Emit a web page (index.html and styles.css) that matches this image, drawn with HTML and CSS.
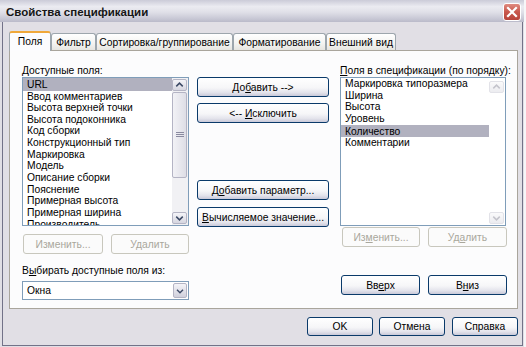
FILE: index.html
```html
<!DOCTYPE html>
<html lang="ru">
<head>
<meta charset="utf-8">
<title>Свойства спецификации</title>
<link rel="stylesheet" href="styles.css">
</head>
<body>
<div class="window">
  <div class="titlebar">
    <span class="title">Свойства спецификации</span>
    <div class="close">
      <svg width="18" height="18" viewBox="0 0 18 18">
        <path d="M5 5 L13 13 M13 5 L5 13" stroke="#fff" stroke-width="2.2" stroke-linecap="square"/>
      </svg>
    </div>
  </div>
  <div class="frame">
    <div class="tabs">
      <div class="tab active t1">Поля</div>
      <div class="tab t2">Фильтр</div>
      <div class="tab t3">Сортировка/группирование</div>
      <div class="tab t4">Форматирование</div>
      <div class="tab t5">Внешний вид</div>
    </div>
    <div class="panel">
      <div class="col col-left">
        <div class="label"><u>Д</u>оступные поля:</div>
        <div class="list">
          <div class="items">
            <div class="item sel">URL</div>
            <div class="item">Ввод комментариев</div>
            <div class="item">Высота верхней точки</div>
            <div class="item">Высота подоконника</div>
            <div class="item">Код сборки</div>
            <div class="item">Конструкционный тип</div>
            <div class="item">Маркировка</div>
            <div class="item">Модель</div>
            <div class="item">Описание сборки</div>
            <div class="item">Пояснение</div>
            <div class="item">Примерная высота</div>
            <div class="item">Примерная ширина</div>
            <div class="item">Производитель</div>
          </div>
          <div class="vscroll">
            <div class="sbtn">
              <svg width="14" height="12" viewBox="0 0 14 12"><path d="M3.5 7.5 L7 4 L10.5 7.5" fill="none" stroke="#3c4a66" stroke-width="1.6"/></svg>
            </div>
            <div class="track">
              <div class="thumb">
                <svg width="8" height="6" viewBox="0 0 8 6"><path d="M0 0.5 H8 M0 2.5 H8 M0 4.5 H8" stroke="#8a8aa0" stroke-width="1"/></svg>
              </div>
            </div>
            <div class="sbtn">
              <svg width="14" height="12" viewBox="0 0 14 12"><path d="M3.5 4.5 L7 8 L10.5 4.5" fill="none" stroke="#3c4a66" stroke-width="1.6"/></svg>
            </div>
          </div>
        </div>
        <div class="btnrow row-left">
          <button class="btn dis b-edit-l">Изменить...</button>
          <button class="btn dis b-del-l">Удалить</button>
        </div>
        <div class="label label-src">В<u>ы</u>бирать доступные поля из:</div>
        <div class="combo">
          <span class="combo-text">Окна</span>
          <div class="dd">
            <svg width="14" height="16" viewBox="0 0 14 16"><path d="M3.5 6.5 L7 10 L10.5 6.5" fill="none" stroke="#3c4a66" stroke-width="1.6"/></svg>
          </div>
        </div>
      </div>

      <div class="col col-mid">
        <button class="btn mid b-add">До<u>б</u>авить --&gt;</button>
        <button class="btn mid b-excl">&lt;-- <u>И</u>сключить</button>
        <button class="btn mid b-param">Д<u>о</u>бавить параметр...</button>
        <button class="btn mid b-calc"><u>В</u>ычисляемое значение...</button>
      </div>

      <div class="col col-right">
        <div class="label"><u>П</u>оля в спецификации (по порядку):</div>
        <div class="list list-right">
          <div class="items">
            <div class="item">Маркировка типоразмера</div>
            <div class="item">Ширина</div>
            <div class="item">Высота</div>
            <div class="item">Уровень</div>
            <div class="item sel">Количество</div>
            <div class="item">Комментарии</div>
          </div>
          <div class="vscroll disabled">
            <div class="sbtn">
              <svg width="14" height="12" viewBox="0 0 14 12"><path d="M3.5 7.5 L7 4 L10.5 7.5" fill="none" stroke="#c4c4cc" stroke-width="1.6"/></svg>
            </div>
            <div class="track"></div>
            <div class="sbtn">
              <svg width="14" height="12" viewBox="0 0 14 12"><path d="M3.5 4.5 L7 8 L10.5 4.5" fill="none" stroke="#c4c4cc" stroke-width="1.6"/></svg>
            </div>
          </div>
        </div>
        <div class="btnrow row-right">
          <button class="btn dis b-edit-r">Из<u>м</u>енить...</button>
          <button class="btn dis b-del-r">Уд<u>а</u>лить</button>
        </div>
        <div class="btnrow row-move">
          <button class="btn b-up">Вв<u>е</u>рх</button>
          <button class="btn b-down">В<u>н</u>из</button>
        </div>
      </div>
    </div>
    <div class="footer">
      <button class="btn foot">OK</button>
      <button class="btn foot f2">Отмена</button>
      <button class="btn foot f3">Справка</button>
    </div>
  </div>
</div>
</body>
</html>
```

FILE: styles.css
```css
* { box-sizing: border-box; }

html, body {
  margin: 0;
  padding: 0;
  background: #f6f6f8;
  font-family: "Liberation Sans", Arial, sans-serif;
  font-size: 10.3px;
  color: #000;
}

.window {
  width: 524px;
  height: 347px;
  background: #e1dfe5;
  display: flex;
  flex-direction: column;
}

.titlebar {
  height: 22px;
  flex: none;
  display: flex;
  align-items: center;
  justify-content: space-between;
  padding: 0 3px 0 6px;
  background: linear-gradient(#cbcbd8 0%, #ebebf1 30%, #e0e0e8 55%, #c8c8d5 85%, #babac9 100%);
}

.title {
  font-weight: bold;
  font-size: 11.5px;
  color: #161616;
  padding-top: 2px;
}

.close {
  width: 18px;
  height: 18px;
  border: 1px solid #fff;
  border-radius: 3px;
  background: linear-gradient(#df8b80, #c8574c 50%, #b7443b);
  display: flex;
  align-items: center;
  justify-content: center;
  margin-top: 2px;
}
.close svg { display: block; margin: -1px; }

.frame {
  flex: 1;
  margin: 0 1px 1px 2px;
  border: 1px solid #727288;
  border-top: none;
  padding: 9px 4px 0 6px;
  display: flex;
  flex-direction: column;
}

.tabs {
  display: flex;
  align-items: flex-end;
  height: 19px;
  flex: none;
}

.tab {
  height: 17px;
  border: 1px solid #9da6ad;
  border-bottom: none;
  border-radius: 3px 3px 0 0;
  background: linear-gradient(#ffffff, #f3f3f1 60%, #e6e5e0);
  display: flex;
  align-items: center;
  justify-content: center;
  white-space: nowrap;
  padding-top: 1px;
}
.tab.active {
  height: 20px;
  margin-bottom: -1px;
  position: relative;
  z-index: 1;
  background: #fcfcfe;
  border-top: 2px solid #f0a83a;
  border-color: #9da6ad;
  border-top-color: #f0a83a;
  padding-top: 0;
  padding-bottom: 2px;
}
.t1 { width: 42px; }
.t2 { width: 45px; }
.t3 { width: 137px; }
.t4 { width: 93px; }
.t5 { width: 70px; }

.panel {
  width: 509px;
  height: 259px;
  flex: none;
  border: 1px solid #a9a59c;
  background: #fcfcfd;
  padding: 13px 0 0 12px;
  display: flex;
}

.col { display: flex; flex-direction: column; }
.col-left { width: 167px; }
.col-mid { width: 132px; margin-left: 8px; padding-top: 13px; }
.col-right { width: 167px; margin-left: 11px; }

.label {
  height: 13px;
  line-height: 13px;
  white-space: nowrap;
}
.label-src { margin-top: 10px; }

.list {
  height: 149px;
  border: 1px solid #7f9db9;
  background: #fff;
  display: flex;
  overflow: hidden;
}
.list-right { width: 166px; }

.items {
  flex: 1;
  overflow: hidden;
}
.item {
  height: 11.67px;
  line-height: 11.67px;
  padding-left: 4px;
  white-space: nowrap;
}
.item.sel {
  background: #b1b1bf;
  height: 12.5px;
  line-height: 13px;
}

.vscroll {
  width: 16px;
  flex: none;
  display: flex;
  flex-direction: column;
  padding: 1px 1px 1px 0;
  background: #f1f1f4;
}
.vscroll.disabled { background: #fff; padding-top: 3px; padding-bottom: 1px; }

.sbtn {
  height: 12px;
  flex: none;
  border: 1px solid #b4b4c4;
  border-radius: 2px;
  background: linear-gradient(#f4f4f8, #d6d6e0);
  display: flex;
  align-items: center;
  justify-content: center;
}
.sbtn svg { display: block; }
.vscroll.disabled .sbtn {
  border-color: #e2e2e8;
  background: linear-gradient(#fafafb, #ececf0);
}

.track {
  flex: 1;
  padding: 1px 0 34px;
  display: flex;
}
.thumb {
  flex: 1;
  border: 1px solid #b4b4c4;
  border-radius: 2px;
  background: linear-gradient(90deg, #f2f2f6, #dedee6);
  display: flex;
  align-items: center;
  justify-content: center;
}

.btn {
  font-family: "Liberation Sans", Arial, sans-serif;
  font-size: 10.3px;
  color: #000;
  height: 20px;
  padding: 0;
  border: 1px solid #0a3a6a;
  border-radius: 3px;
  background: linear-gradient(#ffffff 0%, #f6f6f8 55%, #e4e4ec 80%, #c9c9d9 100%);
  white-space: nowrap;
  line-height: 17px;
}
.btn.dis {
  border-color: #c8c7bd;
  color: #a9a79c;
  background: #fbfbfb;
}

.btnrow { display: flex; }
.row-left { margin-top: 8px; }
.b-edit-l { width: 80px; margin-left: 1px; }
.b-del-l { width: 78px; margin-left: 8px; }

.combo {
  margin-top: 4px;
  height: 19px;
  border: 1px solid #7f9db9;
  background: #fff;
  display: flex;
  align-items: center;
  justify-content: space-between;
  padding: 1px;
}
.combo-text { padding-left: 3px; }
.dd {
  width: 14px;
  height: 15px;
  border: 1px solid #b4b4c4;
  border-radius: 2px;
  background: linear-gradient(#f4f4f8, #d0d0dc);
  display: flex;
  align-items: center;
  justify-content: center;
}
.dd svg { display: block; }

.mid { width: 132px; }
.b-excl { margin-top: 6px; }
.b-param { margin-top: 57px; }
.b-calc { margin-top: 7px; }

.row-right { margin-top: 1px; }
.b-edit-r { width: 78px; margin-left: 2px; }
.b-del-r { width: 79px; margin-left: 8px; }

.row-move { margin-top: 28px; }
.b-up { width: 79px; margin-left: 1px; }
.b-down { width: 79px; margin-left: 8px; }

.footer {
  display: flex;
  justify-content: flex-end;
  margin-top: 8px;
}
.foot { width: 66px; height: 19px; line-height: 16px; }
.f2 { margin-left: 6px; }
.f3 { margin-left: 7px; }

u { text-decoration: underline; }
```
